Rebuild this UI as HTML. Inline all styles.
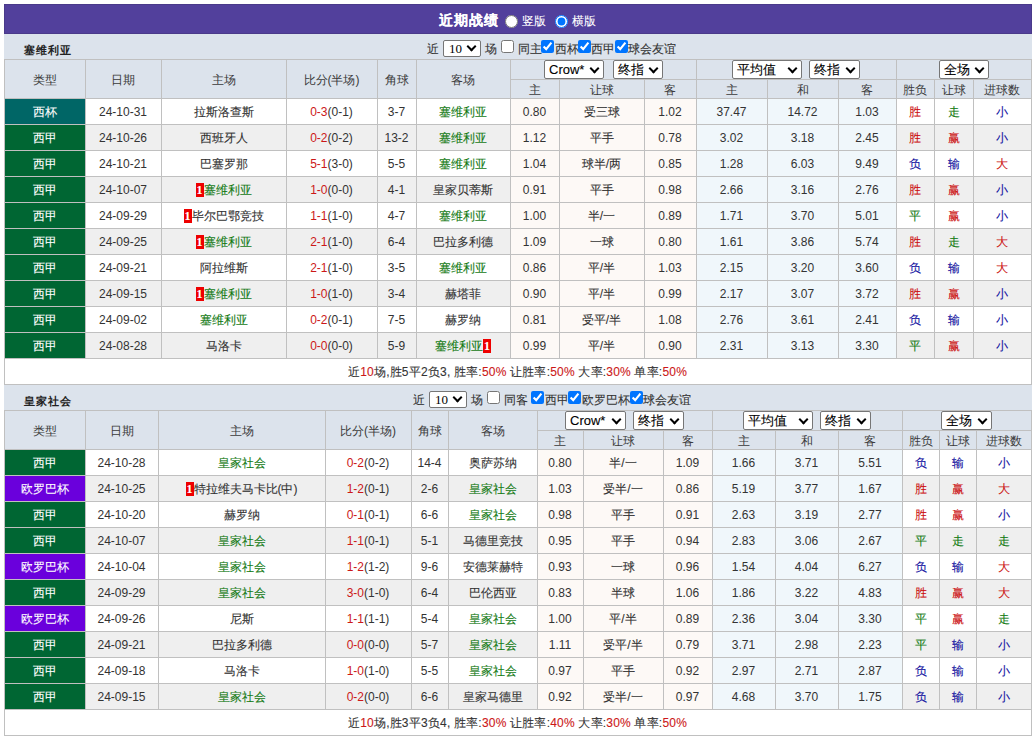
<!DOCTYPE html><html><head><meta charset="utf-8"><style>
*{box-sizing:border-box}
html,body{margin:0;padding:0;background:#fff;width:1033px;height:737px;overflow:hidden}
body{position:relative;-webkit-text-stroke:0.1px currentColor;font-family:"Liberation Sans",sans-serif;font-size:12px;color:#333}
.top{position:absolute;left:4px;top:4px;width:1028px;height:30px;background:#52409c;border:1px solid #4a3a8a;color:#fff;text-align:center}
.top b{position:absolute;left:434px;top:5px;font-size:14px;line-height:20px;letter-spacing:1px;font-weight:900}
.sh{position:absolute;left:4px;width:1028px;height:25px;background:#dce3ec}
.st{position:absolute;left:20px;top:9px;-webkit-text-stroke:0;font-size:11px;letter-spacing:1px;line-height:14px;color:#222}
.filt{position:absolute;left:0;width:1033px;height:25px}
.ft{position:absolute;top:5px;line-height:20px;white-space:nowrap;color:#333}
.fsel{position:absolute;top:6px;width:38px;height:17px;background:#fff;border:1px solid #767676;border-radius:2px;line-height:15px;padding-left:5px;color:#000;font-family:"Liberation Serif",serif;font-size:13px;-webkit-text-stroke:0}
.fsel .chev{top:2px;right:5px}
.fcb{position:absolute;top:6px;margin:0;width:13px;height:13px}
.grid{position:absolute;background:#c0c0c0}
.c{position:absolute;text-align:center;white-space:nowrap;overflow:hidden;padding-right:1px}
.hd{color:#3a3a3a;-webkit-text-stroke:0}
.ty{color:#fff}
.n{-webkit-text-stroke:0}
.sum{color:#333;letter-spacing:0.2px}
.rd{color:#cc1818}
.gr{color:#137a13}
.rc{display:inline-block;position:relative;top:-1px;background:#e00;color:#fff;font-weight:bold;font-family:"Liberation Serif",serif;width:8px;height:14px;line-height:15px;font-size:12px;vertical-align:middle;text-align:center;overflow:hidden}
.sel{position:absolute;height:19px;background:#fff;border:1px solid #767676;border-radius:2px;line-height:17px;padding-left:4px;text-align:left;color:#000;font-size:13px}
.chev{position:absolute;right:5px;top:4px;width:7px;height:7px;border-right:2px solid #000;border-bottom:2px solid #000;transform:rotate(45deg)}
.filt .sel{position:relative;display:inline-block;width:38px;height:17px;vertical-align:middle;line-height:15px;padding-left:3px}
input{margin:0;width:13px;height:13px;vertical-align:middle}
.cb{margin:0 3px 0 4px}
.rad{position:absolute;top:10px;margin:0;width:13px;height:13px}
.rl{position:absolute;top:8px;line-height:16px;font-size:12px;color:#fff}
</style></head><body><div class="top"><b>近期战绩</b><input type="radio" name="v" class="rad" style="left:500px"><span class="rl" style="left:517px">竖版</span><input type="radio" name="v" class="rad" checked style="left:550px"><span class="rl" style="left:567px">横版</span></div><div class="sh" style="top:34px"><b class="st">塞维利亚</b></div>
<div class="filt" style="top:34px"><span class="ft" style="left:427px">近</span><div class="fsel" style="left:443px">10<i class="chev"></i></div><span class="ft" style="left:485px">场</span><input type="checkbox" class="fcb" style="left:501px"><span class="ft" style="left:517.5px">同主</span><input type="checkbox" class="fcb" checked style="left:541px"><span class="ft" style="left:554.5px">西杯</span><input type="checkbox" class="fcb" checked style="left:578px"><span class="ft" style="left:591px">西甲</span><input type="checkbox" class="fcb" checked style="left:615px"><span class="ft" style="left:628px">球会友谊</span></div>
<div class="grid" style="left:4px;top:59px;width:1028px;height:326px"></div>
<div class="c hd" style="left:5px;top:60px;width:80px;height:38px;line-height:40px;background:#dce3ec">类型</div>
<div class="c hd" style="left:86px;top:60px;width:75px;height:38px;line-height:40px;background:#dce3ec">日期</div>
<div class="c hd" style="left:162px;top:60px;width:124px;height:38px;line-height:40px;background:#dce3ec">主场</div>
<div class="c hd" style="left:287px;top:60px;width:90px;height:38px;line-height:40px;background:#dce3ec">比分(半场)</div>
<div class="c hd" style="left:378px;top:60px;width:38px;height:38px;line-height:40px;background:#dce3ec">角球</div>
<div class="c hd" style="left:417px;top:60px;width:93px;height:38px;line-height:40px;background:#dce3ec">客场</div>
<div class="c hd" style="left:511px;top:60px;width:185px;height:19px;line-height:21px;background:#dce3ec"></div>
<div class="c hd" style="left:697px;top:60px;width:199px;height:19px;line-height:21px;background:#dce3ec"></div>
<div class="c hd" style="left:897px;top:60px;width:134px;height:19px;line-height:21px;background:#dce3ec"></div>
<div class="c hd" style="left:511px;top:80px;width:48px;height:18px;line-height:20px;background:#dce3ec">主</div>
<div class="c hd" style="left:560px;top:80px;width:84px;height:18px;line-height:20px;background:#dce3ec">让球</div>
<div class="c hd" style="left:645px;top:80px;width:51px;height:18px;line-height:20px;background:#dce3ec">客</div>
<div class="c hd" style="left:697px;top:80px;width:70px;height:18px;line-height:20px;background:#dce3ec">主</div>
<div class="c hd" style="left:768px;top:80px;width:70px;height:18px;line-height:20px;background:#dce3ec">和</div>
<div class="c hd" style="left:839px;top:80px;width:57px;height:18px;line-height:20px;background:#dce3ec">客</div>
<div class="c hd" style="left:897px;top:80px;width:37px;height:18px;line-height:20px;background:#dce3ec">胜负</div>
<div class="c hd" style="left:935px;top:80px;width:38px;height:18px;line-height:20px;background:#dce3ec">让球</div>
<div class="c hd" style="left:974px;top:80px;width:57px;height:18px;line-height:20px;background:#dce3ec">进球数</div>
<div class="c ty" style="left:5px;top:99px;width:80px;height:25px;line-height:27px;background:#006666">西杯</div>
<div class="c n" style="left:86px;top:99px;width:75px;height:25px;line-height:27px;background:#ffffff">24-10-31</div>
<div class="c " style="left:162px;top:99px;width:124px;height:25px;line-height:27px;background:#ffffff">拉斯洛查斯</div>
<div class="c n" style="left:287px;top:99px;width:90px;height:25px;line-height:27px;background:#ffffff"><span class="rd">0-3</span>(0-1)</div>
<div class="c n" style="left:378px;top:99px;width:38px;height:25px;line-height:27px;background:#ffffff">3-7</div>
<div class="c " style="left:417px;top:99px;width:93px;height:25px;line-height:27px;background:#ffffff"><span class="gr">塞维利亚</span></div>
<div class="c n" style="left:511px;top:99px;width:48px;height:25px;line-height:27px;background:#fdf9f6">0.80</div>
<div class="c " style="left:560px;top:99px;width:84px;height:25px;line-height:27px;background:#fdf9f6">受三球</div>
<div class="c n" style="left:645px;top:99px;width:51px;height:25px;line-height:27px;background:#fdf9f6">1.02</div>
<div class="c n" style="left:697px;top:99px;width:70px;height:25px;line-height:27px;background:#f0f7fb">37.47</div>
<div class="c n" style="left:768px;top:99px;width:70px;height:25px;line-height:27px;background:#f0f7fb">14.72</div>
<div class="c n" style="left:839px;top:99px;width:57px;height:25px;line-height:27px;background:#f0f7fb">1.03</div>
<div class="c " style="left:897px;top:99px;width:37px;height:25px;line-height:27px;background:#ffffff"><span style="color:#cc1010">胜</span></div>
<div class="c " style="left:935px;top:99px;width:38px;height:25px;line-height:27px;background:#ffffff"><span style="color:#107a10">走</span></div>
<div class="c " style="left:974px;top:99px;width:57px;height:25px;line-height:27px;background:#ffffff"><span style="color:#1010a0">小</span></div>
<div class="c ty" style="left:5px;top:125px;width:80px;height:25px;line-height:27px;background:#006633">西甲</div>
<div class="c n" style="left:86px;top:125px;width:75px;height:25px;line-height:27px;background:#efefef">24-10-26</div>
<div class="c " style="left:162px;top:125px;width:124px;height:25px;line-height:27px;background:#efefef">西班牙人</div>
<div class="c n" style="left:287px;top:125px;width:90px;height:25px;line-height:27px;background:#efefef"><span class="rd">0-2</span>(0-2)</div>
<div class="c n" style="left:378px;top:125px;width:38px;height:25px;line-height:27px;background:#efefef">13-2</div>
<div class="c " style="left:417px;top:125px;width:93px;height:25px;line-height:27px;background:#efefef"><span class="gr">塞维利亚</span></div>
<div class="c n" style="left:511px;top:125px;width:48px;height:25px;line-height:27px;background:#fdf9f6">1.12</div>
<div class="c " style="left:560px;top:125px;width:84px;height:25px;line-height:27px;background:#fdf9f6">平手</div>
<div class="c n" style="left:645px;top:125px;width:51px;height:25px;line-height:27px;background:#fdf9f6">0.78</div>
<div class="c n" style="left:697px;top:125px;width:70px;height:25px;line-height:27px;background:#f0f7fb">3.02</div>
<div class="c n" style="left:768px;top:125px;width:70px;height:25px;line-height:27px;background:#f0f7fb">3.18</div>
<div class="c n" style="left:839px;top:125px;width:57px;height:25px;line-height:27px;background:#f0f7fb">2.45</div>
<div class="c " style="left:897px;top:125px;width:37px;height:25px;line-height:27px;background:#efefef"><span style="color:#cc1010">胜</span></div>
<div class="c " style="left:935px;top:125px;width:38px;height:25px;line-height:27px;background:#efefef"><span style="color:#cc1010">赢</span></div>
<div class="c " style="left:974px;top:125px;width:57px;height:25px;line-height:27px;background:#efefef"><span style="color:#1010a0">小</span></div>
<div class="c ty" style="left:5px;top:151px;width:80px;height:25px;line-height:27px;background:#006633">西甲</div>
<div class="c n" style="left:86px;top:151px;width:75px;height:25px;line-height:27px;background:#ffffff">24-10-21</div>
<div class="c " style="left:162px;top:151px;width:124px;height:25px;line-height:27px;background:#ffffff">巴塞罗那</div>
<div class="c n" style="left:287px;top:151px;width:90px;height:25px;line-height:27px;background:#ffffff"><span class="rd">5-1</span>(3-0)</div>
<div class="c n" style="left:378px;top:151px;width:38px;height:25px;line-height:27px;background:#ffffff">5-5</div>
<div class="c " style="left:417px;top:151px;width:93px;height:25px;line-height:27px;background:#ffffff"><span class="gr">塞维利亚</span></div>
<div class="c n" style="left:511px;top:151px;width:48px;height:25px;line-height:27px;background:#fdf9f6">1.04</div>
<div class="c " style="left:560px;top:151px;width:84px;height:25px;line-height:27px;background:#fdf9f6">球半/两</div>
<div class="c n" style="left:645px;top:151px;width:51px;height:25px;line-height:27px;background:#fdf9f6">0.85</div>
<div class="c n" style="left:697px;top:151px;width:70px;height:25px;line-height:27px;background:#f0f7fb">1.28</div>
<div class="c n" style="left:768px;top:151px;width:70px;height:25px;line-height:27px;background:#f0f7fb">6.03</div>
<div class="c n" style="left:839px;top:151px;width:57px;height:25px;line-height:27px;background:#f0f7fb">9.49</div>
<div class="c " style="left:897px;top:151px;width:37px;height:25px;line-height:27px;background:#ffffff"><span style="color:#1010a0">负</span></div>
<div class="c " style="left:935px;top:151px;width:38px;height:25px;line-height:27px;background:#ffffff"><span style="color:#1010a0">输</span></div>
<div class="c " style="left:974px;top:151px;width:57px;height:25px;line-height:27px;background:#ffffff"><span style="color:#cc1010">大</span></div>
<div class="c ty" style="left:5px;top:177px;width:80px;height:25px;line-height:27px;background:#006633">西甲</div>
<div class="c n" style="left:86px;top:177px;width:75px;height:25px;line-height:27px;background:#efefef">24-10-07</div>
<div class="c " style="left:162px;top:177px;width:124px;height:25px;line-height:27px;background:#efefef"><span class="rc">1</span><span class="gr">塞维利亚</span></div>
<div class="c n" style="left:287px;top:177px;width:90px;height:25px;line-height:27px;background:#efefef"><span class="rd">1-0</span>(0-0)</div>
<div class="c n" style="left:378px;top:177px;width:38px;height:25px;line-height:27px;background:#efefef">4-1</div>
<div class="c " style="left:417px;top:177px;width:93px;height:25px;line-height:27px;background:#efefef">皇家贝蒂斯</div>
<div class="c n" style="left:511px;top:177px;width:48px;height:25px;line-height:27px;background:#fdf9f6">0.91</div>
<div class="c " style="left:560px;top:177px;width:84px;height:25px;line-height:27px;background:#fdf9f6">平手</div>
<div class="c n" style="left:645px;top:177px;width:51px;height:25px;line-height:27px;background:#fdf9f6">0.98</div>
<div class="c n" style="left:697px;top:177px;width:70px;height:25px;line-height:27px;background:#f0f7fb">2.66</div>
<div class="c n" style="left:768px;top:177px;width:70px;height:25px;line-height:27px;background:#f0f7fb">3.16</div>
<div class="c n" style="left:839px;top:177px;width:57px;height:25px;line-height:27px;background:#f0f7fb">2.76</div>
<div class="c " style="left:897px;top:177px;width:37px;height:25px;line-height:27px;background:#efefef"><span style="color:#cc1010">胜</span></div>
<div class="c " style="left:935px;top:177px;width:38px;height:25px;line-height:27px;background:#efefef"><span style="color:#cc1010">赢</span></div>
<div class="c " style="left:974px;top:177px;width:57px;height:25px;line-height:27px;background:#efefef"><span style="color:#1010a0">小</span></div>
<div class="c ty" style="left:5px;top:203px;width:80px;height:25px;line-height:27px;background:#006633">西甲</div>
<div class="c n" style="left:86px;top:203px;width:75px;height:25px;line-height:27px;background:#ffffff">24-09-29</div>
<div class="c " style="left:162px;top:203px;width:124px;height:25px;line-height:27px;background:#ffffff"><span class="rc">1</span>毕尔巴鄂竞技</div>
<div class="c n" style="left:287px;top:203px;width:90px;height:25px;line-height:27px;background:#ffffff"><span class="rd">1-1</span>(1-0)</div>
<div class="c n" style="left:378px;top:203px;width:38px;height:25px;line-height:27px;background:#ffffff">4-7</div>
<div class="c " style="left:417px;top:203px;width:93px;height:25px;line-height:27px;background:#ffffff"><span class="gr">塞维利亚</span></div>
<div class="c n" style="left:511px;top:203px;width:48px;height:25px;line-height:27px;background:#fdf9f6">1.00</div>
<div class="c " style="left:560px;top:203px;width:84px;height:25px;line-height:27px;background:#fdf9f6">半/一</div>
<div class="c n" style="left:645px;top:203px;width:51px;height:25px;line-height:27px;background:#fdf9f6">0.89</div>
<div class="c n" style="left:697px;top:203px;width:70px;height:25px;line-height:27px;background:#f0f7fb">1.71</div>
<div class="c n" style="left:768px;top:203px;width:70px;height:25px;line-height:27px;background:#f0f7fb">3.70</div>
<div class="c n" style="left:839px;top:203px;width:57px;height:25px;line-height:27px;background:#f0f7fb">5.01</div>
<div class="c " style="left:897px;top:203px;width:37px;height:25px;line-height:27px;background:#ffffff"><span style="color:#107a10">平</span></div>
<div class="c " style="left:935px;top:203px;width:38px;height:25px;line-height:27px;background:#ffffff"><span style="color:#cc1010">赢</span></div>
<div class="c " style="left:974px;top:203px;width:57px;height:25px;line-height:27px;background:#ffffff"><span style="color:#1010a0">小</span></div>
<div class="c ty" style="left:5px;top:229px;width:80px;height:25px;line-height:27px;background:#006633">西甲</div>
<div class="c n" style="left:86px;top:229px;width:75px;height:25px;line-height:27px;background:#efefef">24-09-25</div>
<div class="c " style="left:162px;top:229px;width:124px;height:25px;line-height:27px;background:#efefef"><span class="rc">1</span><span class="gr">塞维利亚</span></div>
<div class="c n" style="left:287px;top:229px;width:90px;height:25px;line-height:27px;background:#efefef"><span class="rd">2-1</span>(1-0)</div>
<div class="c n" style="left:378px;top:229px;width:38px;height:25px;line-height:27px;background:#efefef">6-4</div>
<div class="c " style="left:417px;top:229px;width:93px;height:25px;line-height:27px;background:#efefef">巴拉多利德</div>
<div class="c n" style="left:511px;top:229px;width:48px;height:25px;line-height:27px;background:#fdf9f6">1.09</div>
<div class="c " style="left:560px;top:229px;width:84px;height:25px;line-height:27px;background:#fdf9f6">一球</div>
<div class="c n" style="left:645px;top:229px;width:51px;height:25px;line-height:27px;background:#fdf9f6">0.80</div>
<div class="c n" style="left:697px;top:229px;width:70px;height:25px;line-height:27px;background:#f0f7fb">1.61</div>
<div class="c n" style="left:768px;top:229px;width:70px;height:25px;line-height:27px;background:#f0f7fb">3.86</div>
<div class="c n" style="left:839px;top:229px;width:57px;height:25px;line-height:27px;background:#f0f7fb">5.74</div>
<div class="c " style="left:897px;top:229px;width:37px;height:25px;line-height:27px;background:#efefef"><span style="color:#cc1010">胜</span></div>
<div class="c " style="left:935px;top:229px;width:38px;height:25px;line-height:27px;background:#efefef"><span style="color:#107a10">走</span></div>
<div class="c " style="left:974px;top:229px;width:57px;height:25px;line-height:27px;background:#efefef"><span style="color:#cc1010">大</span></div>
<div class="c ty" style="left:5px;top:255px;width:80px;height:25px;line-height:27px;background:#006633">西甲</div>
<div class="c n" style="left:86px;top:255px;width:75px;height:25px;line-height:27px;background:#ffffff">24-09-21</div>
<div class="c " style="left:162px;top:255px;width:124px;height:25px;line-height:27px;background:#ffffff">阿拉维斯</div>
<div class="c n" style="left:287px;top:255px;width:90px;height:25px;line-height:27px;background:#ffffff"><span class="rd">2-1</span>(1-0)</div>
<div class="c n" style="left:378px;top:255px;width:38px;height:25px;line-height:27px;background:#ffffff">3-5</div>
<div class="c " style="left:417px;top:255px;width:93px;height:25px;line-height:27px;background:#ffffff"><span class="gr">塞维利亚</span></div>
<div class="c n" style="left:511px;top:255px;width:48px;height:25px;line-height:27px;background:#fdf9f6">0.86</div>
<div class="c " style="left:560px;top:255px;width:84px;height:25px;line-height:27px;background:#fdf9f6">平/半</div>
<div class="c n" style="left:645px;top:255px;width:51px;height:25px;line-height:27px;background:#fdf9f6">1.03</div>
<div class="c n" style="left:697px;top:255px;width:70px;height:25px;line-height:27px;background:#f0f7fb">2.15</div>
<div class="c n" style="left:768px;top:255px;width:70px;height:25px;line-height:27px;background:#f0f7fb">3.20</div>
<div class="c n" style="left:839px;top:255px;width:57px;height:25px;line-height:27px;background:#f0f7fb">3.60</div>
<div class="c " style="left:897px;top:255px;width:37px;height:25px;line-height:27px;background:#ffffff"><span style="color:#1010a0">负</span></div>
<div class="c " style="left:935px;top:255px;width:38px;height:25px;line-height:27px;background:#ffffff"><span style="color:#1010a0">输</span></div>
<div class="c " style="left:974px;top:255px;width:57px;height:25px;line-height:27px;background:#ffffff"><span style="color:#cc1010">大</span></div>
<div class="c ty" style="left:5px;top:281px;width:80px;height:25px;line-height:27px;background:#006633">西甲</div>
<div class="c n" style="left:86px;top:281px;width:75px;height:25px;line-height:27px;background:#efefef">24-09-15</div>
<div class="c " style="left:162px;top:281px;width:124px;height:25px;line-height:27px;background:#efefef"><span class="rc">1</span><span class="gr">塞维利亚</span></div>
<div class="c n" style="left:287px;top:281px;width:90px;height:25px;line-height:27px;background:#efefef"><span class="rd">1-0</span>(1-0)</div>
<div class="c n" style="left:378px;top:281px;width:38px;height:25px;line-height:27px;background:#efefef">3-4</div>
<div class="c " style="left:417px;top:281px;width:93px;height:25px;line-height:27px;background:#efefef">赫塔菲</div>
<div class="c n" style="left:511px;top:281px;width:48px;height:25px;line-height:27px;background:#fdf9f6">0.90</div>
<div class="c " style="left:560px;top:281px;width:84px;height:25px;line-height:27px;background:#fdf9f6">平/半</div>
<div class="c n" style="left:645px;top:281px;width:51px;height:25px;line-height:27px;background:#fdf9f6">0.99</div>
<div class="c n" style="left:697px;top:281px;width:70px;height:25px;line-height:27px;background:#f0f7fb">2.17</div>
<div class="c n" style="left:768px;top:281px;width:70px;height:25px;line-height:27px;background:#f0f7fb">3.07</div>
<div class="c n" style="left:839px;top:281px;width:57px;height:25px;line-height:27px;background:#f0f7fb">3.72</div>
<div class="c " style="left:897px;top:281px;width:37px;height:25px;line-height:27px;background:#efefef"><span style="color:#cc1010">胜</span></div>
<div class="c " style="left:935px;top:281px;width:38px;height:25px;line-height:27px;background:#efefef"><span style="color:#cc1010">赢</span></div>
<div class="c " style="left:974px;top:281px;width:57px;height:25px;line-height:27px;background:#efefef"><span style="color:#1010a0">小</span></div>
<div class="c ty" style="left:5px;top:307px;width:80px;height:25px;line-height:27px;background:#006633">西甲</div>
<div class="c n" style="left:86px;top:307px;width:75px;height:25px;line-height:27px;background:#ffffff">24-09-02</div>
<div class="c " style="left:162px;top:307px;width:124px;height:25px;line-height:27px;background:#ffffff"><span class="gr">塞维利亚</span></div>
<div class="c n" style="left:287px;top:307px;width:90px;height:25px;line-height:27px;background:#ffffff"><span class="rd">0-2</span>(0-1)</div>
<div class="c n" style="left:378px;top:307px;width:38px;height:25px;line-height:27px;background:#ffffff">7-5</div>
<div class="c " style="left:417px;top:307px;width:93px;height:25px;line-height:27px;background:#ffffff">赫罗纳</div>
<div class="c n" style="left:511px;top:307px;width:48px;height:25px;line-height:27px;background:#fdf9f6">0.81</div>
<div class="c " style="left:560px;top:307px;width:84px;height:25px;line-height:27px;background:#fdf9f6">受平/半</div>
<div class="c n" style="left:645px;top:307px;width:51px;height:25px;line-height:27px;background:#fdf9f6">1.08</div>
<div class="c n" style="left:697px;top:307px;width:70px;height:25px;line-height:27px;background:#f0f7fb">2.76</div>
<div class="c n" style="left:768px;top:307px;width:70px;height:25px;line-height:27px;background:#f0f7fb">3.61</div>
<div class="c n" style="left:839px;top:307px;width:57px;height:25px;line-height:27px;background:#f0f7fb">2.41</div>
<div class="c " style="left:897px;top:307px;width:37px;height:25px;line-height:27px;background:#ffffff"><span style="color:#1010a0">负</span></div>
<div class="c " style="left:935px;top:307px;width:38px;height:25px;line-height:27px;background:#ffffff"><span style="color:#1010a0">输</span></div>
<div class="c " style="left:974px;top:307px;width:57px;height:25px;line-height:27px;background:#ffffff"><span style="color:#1010a0">小</span></div>
<div class="c ty" style="left:5px;top:333px;width:80px;height:25px;line-height:27px;background:#006633">西甲</div>
<div class="c n" style="left:86px;top:333px;width:75px;height:25px;line-height:27px;background:#efefef">24-08-28</div>
<div class="c " style="left:162px;top:333px;width:124px;height:25px;line-height:27px;background:#efefef">马洛卡</div>
<div class="c n" style="left:287px;top:333px;width:90px;height:25px;line-height:27px;background:#efefef"><span class="rd">0-0</span>(0-0)</div>
<div class="c n" style="left:378px;top:333px;width:38px;height:25px;line-height:27px;background:#efefef">5-9</div>
<div class="c " style="left:417px;top:333px;width:93px;height:25px;line-height:27px;background:#efefef"><span class="gr">塞维利亚</span><span class="rc">1</span></div>
<div class="c n" style="left:511px;top:333px;width:48px;height:25px;line-height:27px;background:#fdf9f6">0.99</div>
<div class="c " style="left:560px;top:333px;width:84px;height:25px;line-height:27px;background:#fdf9f6">平/半</div>
<div class="c n" style="left:645px;top:333px;width:51px;height:25px;line-height:27px;background:#fdf9f6">0.90</div>
<div class="c n" style="left:697px;top:333px;width:70px;height:25px;line-height:27px;background:#f0f7fb">2.31</div>
<div class="c n" style="left:768px;top:333px;width:70px;height:25px;line-height:27px;background:#f0f7fb">3.13</div>
<div class="c n" style="left:839px;top:333px;width:57px;height:25px;line-height:27px;background:#f0f7fb">3.30</div>
<div class="c " style="left:897px;top:333px;width:37px;height:25px;line-height:27px;background:#efefef"><span style="color:#107a10">平</span></div>
<div class="c " style="left:935px;top:333px;width:38px;height:25px;line-height:27px;background:#efefef"><span style="color:#cc1010">赢</span></div>
<div class="c " style="left:974px;top:333px;width:57px;height:25px;line-height:27px;background:#efefef"><span style="color:#1010a0">小</span></div>
<div class="c sum" style="left:5px;top:359px;width:1026px;height:25px;line-height:27px;background:#ffffff">近<span class="rd">10</span>场,胜5平2负3, 胜率:<span class="rd">50%</span> 让胜率:<span class="rd">50%</span> 大率:<span class="rd">30%</span> 单率:<span class="rd">50%</span></div>
<div class="sel" style="left:544px;top:60px;width:60px">Crow*<i class="chev"></i></div>
<div class="sel" style="left:613px;top:60px;width:50px">终指<i class="chev"></i></div>
<div class="sel" style="left:732px;top:60px;width:70px">平均值<i class="chev"></i></div>
<div class="sel" style="left:809px;top:60px;width:51px">终指<i class="chev"></i></div>
<div class="sel" style="left:939px;top:60px;width:50px">全场<i class="chev"></i></div>
<div class="sh" style="top:385px"><b class="st">皇家社会</b></div>
<div class="filt" style="top:385px"><span class="ft" style="left:413px">近</span><div class="fsel" style="left:429px">10<i class="chev"></i></div><span class="ft" style="left:471px">场</span><input type="checkbox" class="fcb" style="left:487px"><span class="ft" style="left:503.5px">同客</span><input type="checkbox" class="fcb" checked style="left:531px"><span class="ft" style="left:544.5px">西甲</span><input type="checkbox" class="fcb" checked style="left:568px"><span class="ft" style="left:581.5px">欧罗巴杯</span><input type="checkbox" class="fcb" checked style="left:630px"><span class="ft" style="left:643px">球会友谊</span></div>
<div class="grid" style="left:4px;top:410px;width:1028px;height:326px"></div>
<div class="c hd" style="left:5px;top:411px;width:80px;height:38px;line-height:40px;background:#dce3ec">类型</div>
<div class="c hd" style="left:86px;top:411px;width:72px;height:38px;line-height:40px;background:#dce3ec">日期</div>
<div class="c hd" style="left:159px;top:411px;width:166px;height:38px;line-height:40px;background:#dce3ec">主场</div>
<div class="c hd" style="left:326px;top:411px;width:85px;height:38px;line-height:40px;background:#dce3ec">比分(半场)</div>
<div class="c hd" style="left:412px;top:411px;width:36px;height:38px;line-height:40px;background:#dce3ec">角球</div>
<div class="c hd" style="left:449px;top:411px;width:88px;height:38px;line-height:40px;background:#dce3ec">客场</div>
<div class="c hd" style="left:538px;top:411px;width:174px;height:19px;line-height:21px;background:#dce3ec"></div>
<div class="c hd" style="left:713px;top:411px;width:189px;height:19px;line-height:21px;background:#dce3ec"></div>
<div class="c hd" style="left:903px;top:411px;width:128px;height:19px;line-height:21px;background:#dce3ec"></div>
<div class="c hd" style="left:538px;top:431px;width:45px;height:18px;line-height:20px;background:#dce3ec">主</div>
<div class="c hd" style="left:584px;top:431px;width:79px;height:18px;line-height:20px;background:#dce3ec">让球</div>
<div class="c hd" style="left:664px;top:431px;width:48px;height:18px;line-height:20px;background:#dce3ec">客</div>
<div class="c hd" style="left:713px;top:431px;width:62px;height:18px;line-height:20px;background:#dce3ec">主</div>
<div class="c hd" style="left:776px;top:431px;width:62px;height:18px;line-height:20px;background:#dce3ec">和</div>
<div class="c hd" style="left:839px;top:431px;width:63px;height:18px;line-height:20px;background:#dce3ec">客</div>
<div class="c hd" style="left:903px;top:431px;width:36px;height:18px;line-height:20px;background:#dce3ec">胜负</div>
<div class="c hd" style="left:940px;top:431px;width:36px;height:18px;line-height:20px;background:#dce3ec">让球</div>
<div class="c hd" style="left:977px;top:431px;width:54px;height:18px;line-height:20px;background:#dce3ec">进球数</div>
<div class="c ty" style="left:5px;top:450px;width:80px;height:25px;line-height:27px;background:#006633">西甲</div>
<div class="c n" style="left:86px;top:450px;width:72px;height:25px;line-height:27px;background:#ffffff">24-10-28</div>
<div class="c " style="left:159px;top:450px;width:166px;height:25px;line-height:27px;background:#ffffff"><span class="gr">皇家社会</span></div>
<div class="c n" style="left:326px;top:450px;width:85px;height:25px;line-height:27px;background:#ffffff"><span class="rd">0-2</span>(0-2)</div>
<div class="c n" style="left:412px;top:450px;width:36px;height:25px;line-height:27px;background:#ffffff">14-4</div>
<div class="c " style="left:449px;top:450px;width:88px;height:25px;line-height:27px;background:#ffffff">奥萨苏纳</div>
<div class="c n" style="left:538px;top:450px;width:45px;height:25px;line-height:27px;background:#fdf9f6">0.80</div>
<div class="c " style="left:584px;top:450px;width:79px;height:25px;line-height:27px;background:#fdf9f6">半/一</div>
<div class="c n" style="left:664px;top:450px;width:48px;height:25px;line-height:27px;background:#fdf9f6">1.09</div>
<div class="c n" style="left:713px;top:450px;width:62px;height:25px;line-height:27px;background:#f0f7fb">1.66</div>
<div class="c n" style="left:776px;top:450px;width:62px;height:25px;line-height:27px;background:#f0f7fb">3.71</div>
<div class="c n" style="left:839px;top:450px;width:63px;height:25px;line-height:27px;background:#f0f7fb">5.51</div>
<div class="c " style="left:903px;top:450px;width:36px;height:25px;line-height:27px;background:#ffffff"><span style="color:#1010a0">负</span></div>
<div class="c " style="left:940px;top:450px;width:36px;height:25px;line-height:27px;background:#ffffff"><span style="color:#1010a0">输</span></div>
<div class="c " style="left:977px;top:450px;width:54px;height:25px;line-height:27px;background:#ffffff"><span style="color:#1010a0">小</span></div>
<div class="c ty" style="left:5px;top:476px;width:80px;height:25px;line-height:27px;background:#6a00dc">欧罗巴杯</div>
<div class="c n" style="left:86px;top:476px;width:72px;height:25px;line-height:27px;background:#efefef">24-10-25</div>
<div class="c " style="left:159px;top:476px;width:166px;height:25px;line-height:27px;background:#efefef"><span class="rc">1</span>特拉维夫马卡比(中)</div>
<div class="c n" style="left:326px;top:476px;width:85px;height:25px;line-height:27px;background:#efefef"><span class="rd">1-2</span>(0-1)</div>
<div class="c n" style="left:412px;top:476px;width:36px;height:25px;line-height:27px;background:#efefef">2-6</div>
<div class="c " style="left:449px;top:476px;width:88px;height:25px;line-height:27px;background:#efefef"><span class="gr">皇家社会</span></div>
<div class="c n" style="left:538px;top:476px;width:45px;height:25px;line-height:27px;background:#fdf9f6">1.03</div>
<div class="c " style="left:584px;top:476px;width:79px;height:25px;line-height:27px;background:#fdf9f6">受半/一</div>
<div class="c n" style="left:664px;top:476px;width:48px;height:25px;line-height:27px;background:#fdf9f6">0.86</div>
<div class="c n" style="left:713px;top:476px;width:62px;height:25px;line-height:27px;background:#f0f7fb">5.19</div>
<div class="c n" style="left:776px;top:476px;width:62px;height:25px;line-height:27px;background:#f0f7fb">3.77</div>
<div class="c n" style="left:839px;top:476px;width:63px;height:25px;line-height:27px;background:#f0f7fb">1.67</div>
<div class="c " style="left:903px;top:476px;width:36px;height:25px;line-height:27px;background:#efefef"><span style="color:#cc1010">胜</span></div>
<div class="c " style="left:940px;top:476px;width:36px;height:25px;line-height:27px;background:#efefef"><span style="color:#cc1010">赢</span></div>
<div class="c " style="left:977px;top:476px;width:54px;height:25px;line-height:27px;background:#efefef"><span style="color:#cc1010">大</span></div>
<div class="c ty" style="left:5px;top:502px;width:80px;height:25px;line-height:27px;background:#006633">西甲</div>
<div class="c n" style="left:86px;top:502px;width:72px;height:25px;line-height:27px;background:#ffffff">24-10-20</div>
<div class="c " style="left:159px;top:502px;width:166px;height:25px;line-height:27px;background:#ffffff">赫罗纳</div>
<div class="c n" style="left:326px;top:502px;width:85px;height:25px;line-height:27px;background:#ffffff"><span class="rd">0-1</span>(0-1)</div>
<div class="c n" style="left:412px;top:502px;width:36px;height:25px;line-height:27px;background:#ffffff">6-6</div>
<div class="c " style="left:449px;top:502px;width:88px;height:25px;line-height:27px;background:#ffffff"><span class="gr">皇家社会</span></div>
<div class="c n" style="left:538px;top:502px;width:45px;height:25px;line-height:27px;background:#fdf9f6">0.98</div>
<div class="c " style="left:584px;top:502px;width:79px;height:25px;line-height:27px;background:#fdf9f6">平手</div>
<div class="c n" style="left:664px;top:502px;width:48px;height:25px;line-height:27px;background:#fdf9f6">0.91</div>
<div class="c n" style="left:713px;top:502px;width:62px;height:25px;line-height:27px;background:#f0f7fb">2.63</div>
<div class="c n" style="left:776px;top:502px;width:62px;height:25px;line-height:27px;background:#f0f7fb">3.19</div>
<div class="c n" style="left:839px;top:502px;width:63px;height:25px;line-height:27px;background:#f0f7fb">2.77</div>
<div class="c " style="left:903px;top:502px;width:36px;height:25px;line-height:27px;background:#ffffff"><span style="color:#cc1010">胜</span></div>
<div class="c " style="left:940px;top:502px;width:36px;height:25px;line-height:27px;background:#ffffff"><span style="color:#cc1010">赢</span></div>
<div class="c " style="left:977px;top:502px;width:54px;height:25px;line-height:27px;background:#ffffff"><span style="color:#1010a0">小</span></div>
<div class="c ty" style="left:5px;top:528px;width:80px;height:25px;line-height:27px;background:#006633">西甲</div>
<div class="c n" style="left:86px;top:528px;width:72px;height:25px;line-height:27px;background:#efefef">24-10-07</div>
<div class="c " style="left:159px;top:528px;width:166px;height:25px;line-height:27px;background:#efefef"><span class="gr">皇家社会</span></div>
<div class="c n" style="left:326px;top:528px;width:85px;height:25px;line-height:27px;background:#efefef"><span class="rd">1-1</span>(0-1)</div>
<div class="c n" style="left:412px;top:528px;width:36px;height:25px;line-height:27px;background:#efefef">5-1</div>
<div class="c " style="left:449px;top:528px;width:88px;height:25px;line-height:27px;background:#efefef">马德里竞技</div>
<div class="c n" style="left:538px;top:528px;width:45px;height:25px;line-height:27px;background:#fdf9f6">0.95</div>
<div class="c " style="left:584px;top:528px;width:79px;height:25px;line-height:27px;background:#fdf9f6">平手</div>
<div class="c n" style="left:664px;top:528px;width:48px;height:25px;line-height:27px;background:#fdf9f6">0.94</div>
<div class="c n" style="left:713px;top:528px;width:62px;height:25px;line-height:27px;background:#f0f7fb">2.83</div>
<div class="c n" style="left:776px;top:528px;width:62px;height:25px;line-height:27px;background:#f0f7fb">3.06</div>
<div class="c n" style="left:839px;top:528px;width:63px;height:25px;line-height:27px;background:#f0f7fb">2.67</div>
<div class="c " style="left:903px;top:528px;width:36px;height:25px;line-height:27px;background:#efefef"><span style="color:#107a10">平</span></div>
<div class="c " style="left:940px;top:528px;width:36px;height:25px;line-height:27px;background:#efefef"><span style="color:#107a10">走</span></div>
<div class="c " style="left:977px;top:528px;width:54px;height:25px;line-height:27px;background:#efefef"><span style="color:#107a10">走</span></div>
<div class="c ty" style="left:5px;top:554px;width:80px;height:25px;line-height:27px;background:#6a00dc">欧罗巴杯</div>
<div class="c n" style="left:86px;top:554px;width:72px;height:25px;line-height:27px;background:#ffffff">24-10-04</div>
<div class="c " style="left:159px;top:554px;width:166px;height:25px;line-height:27px;background:#ffffff"><span class="gr">皇家社会</span></div>
<div class="c n" style="left:326px;top:554px;width:85px;height:25px;line-height:27px;background:#ffffff"><span class="rd">1-2</span>(1-2)</div>
<div class="c n" style="left:412px;top:554px;width:36px;height:25px;line-height:27px;background:#ffffff">9-6</div>
<div class="c " style="left:449px;top:554px;width:88px;height:25px;line-height:27px;background:#ffffff">安德莱赫特</div>
<div class="c n" style="left:538px;top:554px;width:45px;height:25px;line-height:27px;background:#fdf9f6">0.93</div>
<div class="c " style="left:584px;top:554px;width:79px;height:25px;line-height:27px;background:#fdf9f6">一球</div>
<div class="c n" style="left:664px;top:554px;width:48px;height:25px;line-height:27px;background:#fdf9f6">0.96</div>
<div class="c n" style="left:713px;top:554px;width:62px;height:25px;line-height:27px;background:#f0f7fb">1.54</div>
<div class="c n" style="left:776px;top:554px;width:62px;height:25px;line-height:27px;background:#f0f7fb">4.04</div>
<div class="c n" style="left:839px;top:554px;width:63px;height:25px;line-height:27px;background:#f0f7fb">6.27</div>
<div class="c " style="left:903px;top:554px;width:36px;height:25px;line-height:27px;background:#ffffff"><span style="color:#1010a0">负</span></div>
<div class="c " style="left:940px;top:554px;width:36px;height:25px;line-height:27px;background:#ffffff"><span style="color:#1010a0">输</span></div>
<div class="c " style="left:977px;top:554px;width:54px;height:25px;line-height:27px;background:#ffffff"><span style="color:#cc1010">大</span></div>
<div class="c ty" style="left:5px;top:580px;width:80px;height:25px;line-height:27px;background:#006633">西甲</div>
<div class="c n" style="left:86px;top:580px;width:72px;height:25px;line-height:27px;background:#efefef">24-09-29</div>
<div class="c " style="left:159px;top:580px;width:166px;height:25px;line-height:27px;background:#efefef"><span class="gr">皇家社会</span></div>
<div class="c n" style="left:326px;top:580px;width:85px;height:25px;line-height:27px;background:#efefef"><span class="rd">3-0</span>(1-0)</div>
<div class="c n" style="left:412px;top:580px;width:36px;height:25px;line-height:27px;background:#efefef">6-4</div>
<div class="c " style="left:449px;top:580px;width:88px;height:25px;line-height:27px;background:#efefef">巴伦西亚</div>
<div class="c n" style="left:538px;top:580px;width:45px;height:25px;line-height:27px;background:#fdf9f6">0.83</div>
<div class="c " style="left:584px;top:580px;width:79px;height:25px;line-height:27px;background:#fdf9f6">半球</div>
<div class="c n" style="left:664px;top:580px;width:48px;height:25px;line-height:27px;background:#fdf9f6">1.06</div>
<div class="c n" style="left:713px;top:580px;width:62px;height:25px;line-height:27px;background:#f0f7fb">1.86</div>
<div class="c n" style="left:776px;top:580px;width:62px;height:25px;line-height:27px;background:#f0f7fb">3.22</div>
<div class="c n" style="left:839px;top:580px;width:63px;height:25px;line-height:27px;background:#f0f7fb">4.83</div>
<div class="c " style="left:903px;top:580px;width:36px;height:25px;line-height:27px;background:#efefef"><span style="color:#cc1010">胜</span></div>
<div class="c " style="left:940px;top:580px;width:36px;height:25px;line-height:27px;background:#efefef"><span style="color:#cc1010">赢</span></div>
<div class="c " style="left:977px;top:580px;width:54px;height:25px;line-height:27px;background:#efefef"><span style="color:#cc1010">大</span></div>
<div class="c ty" style="left:5px;top:606px;width:80px;height:25px;line-height:27px;background:#6a00dc">欧罗巴杯</div>
<div class="c n" style="left:86px;top:606px;width:72px;height:25px;line-height:27px;background:#ffffff">24-09-26</div>
<div class="c " style="left:159px;top:606px;width:166px;height:25px;line-height:27px;background:#ffffff">尼斯</div>
<div class="c n" style="left:326px;top:606px;width:85px;height:25px;line-height:27px;background:#ffffff"><span class="rd">1-1</span>(1-1)</div>
<div class="c n" style="left:412px;top:606px;width:36px;height:25px;line-height:27px;background:#ffffff">5-4</div>
<div class="c " style="left:449px;top:606px;width:88px;height:25px;line-height:27px;background:#ffffff"><span class="gr">皇家社会</span></div>
<div class="c n" style="left:538px;top:606px;width:45px;height:25px;line-height:27px;background:#fdf9f6">1.00</div>
<div class="c " style="left:584px;top:606px;width:79px;height:25px;line-height:27px;background:#fdf9f6">平/半</div>
<div class="c n" style="left:664px;top:606px;width:48px;height:25px;line-height:27px;background:#fdf9f6">0.89</div>
<div class="c n" style="left:713px;top:606px;width:62px;height:25px;line-height:27px;background:#f0f7fb">2.36</div>
<div class="c n" style="left:776px;top:606px;width:62px;height:25px;line-height:27px;background:#f0f7fb">3.04</div>
<div class="c n" style="left:839px;top:606px;width:63px;height:25px;line-height:27px;background:#f0f7fb">3.30</div>
<div class="c " style="left:903px;top:606px;width:36px;height:25px;line-height:27px;background:#ffffff"><span style="color:#107a10">平</span></div>
<div class="c " style="left:940px;top:606px;width:36px;height:25px;line-height:27px;background:#ffffff"><span style="color:#cc1010">赢</span></div>
<div class="c " style="left:977px;top:606px;width:54px;height:25px;line-height:27px;background:#ffffff"><span style="color:#107a10">走</span></div>
<div class="c ty" style="left:5px;top:632px;width:80px;height:25px;line-height:27px;background:#006633">西甲</div>
<div class="c n" style="left:86px;top:632px;width:72px;height:25px;line-height:27px;background:#efefef">24-09-21</div>
<div class="c " style="left:159px;top:632px;width:166px;height:25px;line-height:27px;background:#efefef">巴拉多利德</div>
<div class="c n" style="left:326px;top:632px;width:85px;height:25px;line-height:27px;background:#efefef"><span class="rd">0-0</span>(0-0)</div>
<div class="c n" style="left:412px;top:632px;width:36px;height:25px;line-height:27px;background:#efefef">5-7</div>
<div class="c " style="left:449px;top:632px;width:88px;height:25px;line-height:27px;background:#efefef"><span class="gr">皇家社会</span></div>
<div class="c n" style="left:538px;top:632px;width:45px;height:25px;line-height:27px;background:#fdf9f6">1.11</div>
<div class="c " style="left:584px;top:632px;width:79px;height:25px;line-height:27px;background:#fdf9f6">受平/半</div>
<div class="c n" style="left:664px;top:632px;width:48px;height:25px;line-height:27px;background:#fdf9f6">0.79</div>
<div class="c n" style="left:713px;top:632px;width:62px;height:25px;line-height:27px;background:#f0f7fb">3.71</div>
<div class="c n" style="left:776px;top:632px;width:62px;height:25px;line-height:27px;background:#f0f7fb">2.98</div>
<div class="c n" style="left:839px;top:632px;width:63px;height:25px;line-height:27px;background:#f0f7fb">2.23</div>
<div class="c " style="left:903px;top:632px;width:36px;height:25px;line-height:27px;background:#efefef"><span style="color:#107a10">平</span></div>
<div class="c " style="left:940px;top:632px;width:36px;height:25px;line-height:27px;background:#efefef"><span style="color:#1010a0">输</span></div>
<div class="c " style="left:977px;top:632px;width:54px;height:25px;line-height:27px;background:#efefef"><span style="color:#1010a0">小</span></div>
<div class="c ty" style="left:5px;top:658px;width:80px;height:25px;line-height:27px;background:#006633">西甲</div>
<div class="c n" style="left:86px;top:658px;width:72px;height:25px;line-height:27px;background:#ffffff">24-09-18</div>
<div class="c " style="left:159px;top:658px;width:166px;height:25px;line-height:27px;background:#ffffff">马洛卡</div>
<div class="c n" style="left:326px;top:658px;width:85px;height:25px;line-height:27px;background:#ffffff"><span class="rd">1-0</span>(1-0)</div>
<div class="c n" style="left:412px;top:658px;width:36px;height:25px;line-height:27px;background:#ffffff">5-5</div>
<div class="c " style="left:449px;top:658px;width:88px;height:25px;line-height:27px;background:#ffffff"><span class="gr">皇家社会</span></div>
<div class="c n" style="left:538px;top:658px;width:45px;height:25px;line-height:27px;background:#fdf9f6">0.97</div>
<div class="c " style="left:584px;top:658px;width:79px;height:25px;line-height:27px;background:#fdf9f6">平手</div>
<div class="c n" style="left:664px;top:658px;width:48px;height:25px;line-height:27px;background:#fdf9f6">0.92</div>
<div class="c n" style="left:713px;top:658px;width:62px;height:25px;line-height:27px;background:#f0f7fb">2.97</div>
<div class="c n" style="left:776px;top:658px;width:62px;height:25px;line-height:27px;background:#f0f7fb">2.71</div>
<div class="c n" style="left:839px;top:658px;width:63px;height:25px;line-height:27px;background:#f0f7fb">2.87</div>
<div class="c " style="left:903px;top:658px;width:36px;height:25px;line-height:27px;background:#ffffff"><span style="color:#1010a0">负</span></div>
<div class="c " style="left:940px;top:658px;width:36px;height:25px;line-height:27px;background:#ffffff"><span style="color:#1010a0">输</span></div>
<div class="c " style="left:977px;top:658px;width:54px;height:25px;line-height:27px;background:#ffffff"><span style="color:#1010a0">小</span></div>
<div class="c ty" style="left:5px;top:684px;width:80px;height:25px;line-height:27px;background:#006633">西甲</div>
<div class="c n" style="left:86px;top:684px;width:72px;height:25px;line-height:27px;background:#efefef">24-09-15</div>
<div class="c " style="left:159px;top:684px;width:166px;height:25px;line-height:27px;background:#efefef"><span class="gr">皇家社会</span></div>
<div class="c n" style="left:326px;top:684px;width:85px;height:25px;line-height:27px;background:#efefef"><span class="rd">0-2</span>(0-0)</div>
<div class="c n" style="left:412px;top:684px;width:36px;height:25px;line-height:27px;background:#efefef">6-6</div>
<div class="c " style="left:449px;top:684px;width:88px;height:25px;line-height:27px;background:#efefef">皇家马德里</div>
<div class="c n" style="left:538px;top:684px;width:45px;height:25px;line-height:27px;background:#fdf9f6">0.92</div>
<div class="c " style="left:584px;top:684px;width:79px;height:25px;line-height:27px;background:#fdf9f6">受半/一</div>
<div class="c n" style="left:664px;top:684px;width:48px;height:25px;line-height:27px;background:#fdf9f6">0.97</div>
<div class="c n" style="left:713px;top:684px;width:62px;height:25px;line-height:27px;background:#f0f7fb">4.68</div>
<div class="c n" style="left:776px;top:684px;width:62px;height:25px;line-height:27px;background:#f0f7fb">3.70</div>
<div class="c n" style="left:839px;top:684px;width:63px;height:25px;line-height:27px;background:#f0f7fb">1.75</div>
<div class="c " style="left:903px;top:684px;width:36px;height:25px;line-height:27px;background:#efefef"><span style="color:#1010a0">负</span></div>
<div class="c " style="left:940px;top:684px;width:36px;height:25px;line-height:27px;background:#efefef"><span style="color:#1010a0">输</span></div>
<div class="c " style="left:977px;top:684px;width:54px;height:25px;line-height:27px;background:#efefef"><span style="color:#1010a0">小</span></div>
<div class="c sum" style="left:5px;top:710px;width:1026px;height:25px;line-height:27px;background:#ffffff">近<span class="rd">10</span>场,胜3平3负4, 胜率:<span class="rd">30%</span> 让胜率:<span class="rd">40%</span> 大率:<span class="rd">30%</span> 单率:<span class="rd">50%</span></div>
<div class="sel" style="left:565px;top:411px;width:61px">Crow*<i class="chev"></i></div>
<div class="sel" style="left:633px;top:411px;width:51px">终指<i class="chev"></i></div>
<div class="sel" style="left:743px;top:411px;width:70px">平均值<i class="chev"></i></div>
<div class="sel" style="left:820px;top:411px;width:51px">终指<i class="chev"></i></div>
<div class="sel" style="left:941px;top:411px;width:51px">全场<i class="chev"></i></div></body></html>
